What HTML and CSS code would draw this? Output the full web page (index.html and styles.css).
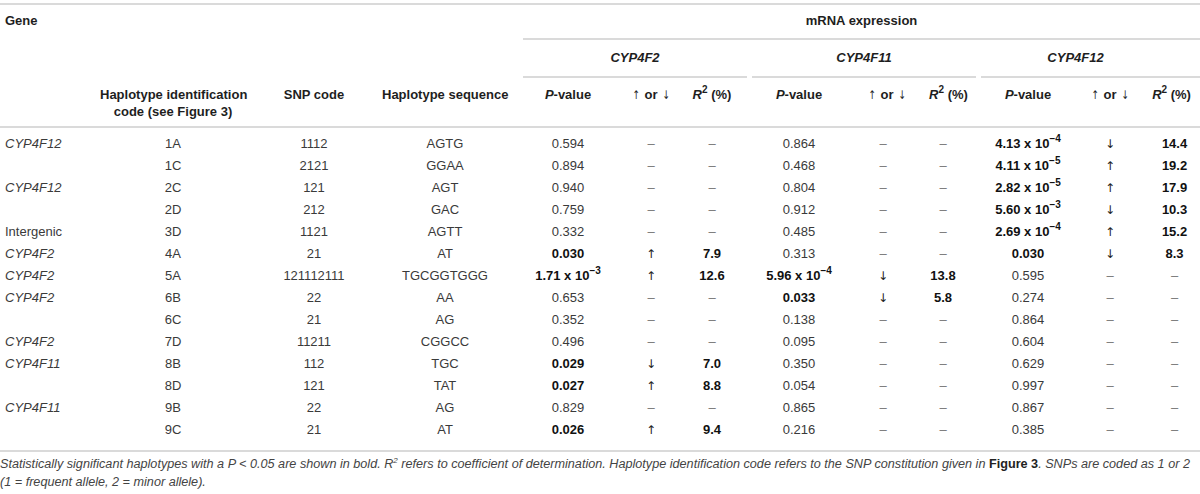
FILE: index.html
```html
<!DOCTYPE html>
<html lang="en">
<head>
<meta charset="utf-8">
<title>Haplotype table</title>
<link rel="stylesheet" href="styles.css">
</head>
<body>
<table class="tbl">
  <colgroup>
    <col class="w1"><col class="w2"><col class="w3"><col class="w4">
    <col class="w5"><col class="w6"><col class="w7">
    <col class="w8"><col class="w9"><col class="w10">
    <col class="w11"><col class="w12"><col class="w13">
  </colgroup>
  <thead>
    <tr>
      <th rowspan="3" class="gene-h">Gene</th>
      <th colspan="3"></th>
      <th colspan="9" class="grp"><div class="grp-in first">mRNA expression</div></th>
    </tr>
    <tr>
      <th colspan="3"></th>
      <th colspan="3" class="grp"><div class="grp-in sub g1"><i>CYP4F2</i></div></th>
      <th colspan="3" class="grp"><div class="grp-in sub g2"><i>CYP4F11</i></div></th>
      <th colspan="3" class="grp"><div class="grp-in sub g3"><i>CYP4F12</i></div></th>
    </tr>
    <tr class="colh">
      <th>Haplotype identification<br>code (see Figure 3)</th>
      <th>SNP code</th>
      <th>Haplotype sequence</th>
      <th><i>P</i>-value</th>
      <th><span class="ar">↑</span> or <span class="ar">↓</span></th>
      <th><i>R</i><sup>2</sup> (%)</th>
      <th><i>P</i>-value</th>
      <th class="c9"><span class="ar">↑</span> or <span class="ar">↓</span></th>
      <th class="c10"><i>R</i><sup>2</sup> (%)</th>
      <th><i>P</i>-value</th>
      <th><span class="ar">↑</span> or <span class="ar">↓</span></th>
      <th class="c13"><i>R</i><sup>2</sup> (%)</th>
    </tr>
  </thead>
  <tbody>
    <tr class="r-first">
      <td class="gene"><i>CYP4F12</i></td><td>1A</td><td>1112</td><td>AGTG</td>
      <td>0.594</td><td class="d">–</td><td class="d">–</td>
      <td>0.864</td><td class="d">–</td><td class="d c10">–</td>
      <td><b>4.13 x 10<sup>−4</sup></b></td><td class="ar">↓</td><td class="c13"><b>14.4</b></td>
    </tr>
    <tr>
      <td class="gene"></td><td>1C</td><td>2121</td><td>GGAA</td>
      <td>0.894</td><td class="d">–</td><td class="d">–</td>
      <td>0.468</td><td class="d">–</td><td class="d c10">–</td>
      <td><b>4.11 x 10<sup>−5</sup></b></td><td class="ar">↑</td><td class="c13"><b>19.2</b></td>
    </tr>
    <tr>
      <td class="gene"><i>CYP4F12</i></td><td>2C</td><td>121</td><td>AGT</td>
      <td>0.940</td><td class="d">–</td><td class="d">–</td>
      <td>0.804</td><td class="d">–</td><td class="d c10">–</td>
      <td><b>2.82 x 10<sup>−5</sup></b></td><td class="ar">↑</td><td class="c13"><b>17.9</b></td>
    </tr>
    <tr>
      <td class="gene"></td><td>2D</td><td>212</td><td>GAC</td>
      <td>0.759</td><td class="d">–</td><td class="d">–</td>
      <td>0.912</td><td class="d">–</td><td class="d c10">–</td>
      <td><b>5.60 x 10<sup>−3</sup></b></td><td class="ar">↓</td><td class="c13"><b>10.3</b></td>
    </tr>
    <tr>
      <td class="gene">Intergenic</td><td>3D</td><td>1121</td><td>AGTT</td>
      <td>0.332</td><td class="d">–</td><td class="d">–</td>
      <td>0.485</td><td class="d">–</td><td class="d c10">–</td>
      <td><b>2.69 x 10<sup>−4</sup></b></td><td class="ar">↑</td><td class="c13"><b>15.2</b></td>
    </tr>
    <tr>
      <td class="gene"><i>CYP4F2</i></td><td>4A</td><td>21</td><td>AT</td>
      <td><b>0.030</b></td><td class="ar">↑</td><td><b>7.9</b></td>
      <td>0.313</td><td class="d">–</td><td class="d c10">–</td>
      <td><b>0.030</b></td><td class="ar">↓</td><td class="c13"><b>8.3</b></td>
    </tr>
    <tr>
      <td class="gene"><i>CYP4F2</i></td><td>5A</td><td>121112111</td><td>TGCGGTGGG</td>
      <td><b>1.71 x 10<sup>−3</sup></b></td><td class="ar">↑</td><td><b>12.6</b></td>
      <td><b>5.96 x 10<sup>−4</sup></b></td><td class="ar">↓</td><td class="c10"><b>13.8</b></td>
      <td>0.595</td><td class="d">–</td><td class="d c13">–</td>
    </tr>
    <tr>
      <td class="gene"><i>CYP4F2</i></td><td>6B</td><td>22</td><td>AA</td>
      <td>0.653</td><td class="d">–</td><td class="d">–</td>
      <td><b>0.033</b></td><td class="ar">↓</td><td class="c10"><b>5.8</b></td>
      <td>0.274</td><td class="d">–</td><td class="d c13">–</td>
    </tr>
    <tr>
      <td class="gene"></td><td>6C</td><td>21</td><td>AG</td>
      <td>0.352</td><td class="d">–</td><td class="d">–</td>
      <td>0.138</td><td class="d">–</td><td class="d c10">–</td>
      <td>0.864</td><td class="d">–</td><td class="d c13">–</td>
    </tr>
    <tr>
      <td class="gene"><i>CYP4F2</i></td><td>7D</td><td>11211</td><td>CGGCC</td>
      <td>0.496</td><td class="d">–</td><td class="d">–</td>
      <td>0.095</td><td class="d">–</td><td class="d c10">–</td>
      <td>0.604</td><td class="d">–</td><td class="d c13">–</td>
    </tr>
    <tr>
      <td class="gene"><i>CYP4F11</i></td><td>8B</td><td>112</td><td>TGC</td>
      <td><b>0.029</b></td><td class="ar">↓</td><td><b>7.0</b></td>
      <td>0.350</td><td class="d">–</td><td class="d c10">–</td>
      <td>0.629</td><td class="d">–</td><td class="d c13">–</td>
    </tr>
    <tr>
      <td class="gene"></td><td>8D</td><td>121</td><td>TAT</td>
      <td><b>0.027</b></td><td class="ar">↑</td><td><b>8.8</b></td>
      <td>0.054</td><td class="d">–</td><td class="d c10">–</td>
      <td>0.997</td><td class="d">–</td><td class="d c13">–</td>
    </tr>
    <tr>
      <td class="gene"><i>CYP4F11</i></td><td>9B</td><td>22</td><td>AG</td>
      <td>0.829</td><td class="d">–</td><td class="d">–</td>
      <td>0.865</td><td class="d">–</td><td class="d c10">–</td>
      <td>0.867</td><td class="d">–</td><td class="d c13">–</td>
    </tr>
    <tr class="r-last">
      <td class="gene"></td><td>9C</td><td>21</td><td>AT</td>
      <td><b>0.026</b></td><td class="ar">↑</td><td><b>9.4</b></td>
      <td>0.216</td><td class="d">–</td><td class="d c10">–</td>
      <td>0.385</td><td class="d">–</td><td class="d c13">–</td>
    </tr>
  </tbody>
</table>
<p class="note">Statistically significant haplotypes with a P &lt; 0.05 are shown in bold. R<sup>2</sup> refers to coefficient of determination. Haplotype identification code refers to the SNP constitution given in <b>Figure 3</b>. SNPs are coded as 1 or 2 (1 = frequent allele, 2 = minor allele).</p>
</body>
</html>
```

FILE: styles.css
```css
html, body {
  margin: 0;
  padding: 0;
  background: #fff;
}
body {
  font-family: "Liberation Sans", Arial, Helvetica, sans-serif;
  font-size: 13px;
  color: #3a3a3a;
  width: 1200px;
  overflow: hidden;
}
.tbl {
  width: 1200px;
  table-layout: fixed;
  border-collapse: separate;
  border-spacing: 0;
  margin-top: 3px;
  border-top: 2px solid #dadada;
  border-bottom: 2px solid #dadada;
}
.w1 { width: 100px; }
.w2 { width: 146px; }
.w3 { width: 136px; }
.w4 { width: 126px; }
.w5 { width: 120px; }
.w6 { width: 46px; }
.w7 { width: 76px; }
.w8 { width: 98px; }
.w9 { width: 70px; }
.w10 { width: 61px; }
.w11 { width: 98px; }
.w12 { width: 66px; }
.w13 { width: 57px; }

th, td {
  padding: 0;
  text-align: center;
  white-space: nowrap;
}
th {
  font-weight: bold;
  color: #1e1e1e;
  vertical-align: top;
}
th i { font-style: italic; }
.gene-h {
  text-align: left;
  padding: 8px 0 0 5px;
  line-height: 16px;
  border-bottom: 2px solid #dadada;
}
.grp-in {
  line-height: 16px;
  border-bottom: 2px solid #dadada;
}
.grp-in.first {
  padding: 8px 0 9px;
  margin-left: 15px;
}
.grp-in.sub {
  padding: 10px 0 10px;
}
.g1 { margin-left: 15px; margin-right: 3px; }
.g2 { margin-left: 2px; margin-right: 3px; }
.g3 { margin-left: 2px; padding-right: 30px !important; }

.colh th {
  padding: 8px 0 6px;
  line-height: 17px;
  border-bottom: 2px solid #dadada;
}
.colh th.c9 { padding-left: 8px; }
.ar {
  font-family: "DejaVu Sans", sans-serif;
  font-size: 12px;
  font-weight: normal;
  line-height: 0;
  display: inline-block;
  transform: scaleX(0.75);
}
td.ar {
  display: table-cell;
  color: #222;
  line-height: 22px;
  transform: none;
}
sup {
  font-size: 10px;
  line-height: 0;
  vertical-align: 6px;
}
td {
  line-height: 22px;
  height: 22px;
}
td b {
  color: #111;
  font-weight: bold;
}
td.gene {
  text-align: left;
  padding-left: 5px;
}
td.d {
  color: #777;
}
.c10 { padding-right: 11px; }
.c13 { padding-left: 6px; }
.r-first td { padding-top: 5px; }
.r-last td { padding-bottom: 9px; }

.note {
  margin: 3px 0 0;
  font-size: 12.65px;
  line-height: 18px;
  font-style: italic;
  color: #444;
}
.note sup {
  font-size: 8px;
  vertical-align: 5px;
}
.note b {
  font-style: normal;
  color: #222;
}
```
